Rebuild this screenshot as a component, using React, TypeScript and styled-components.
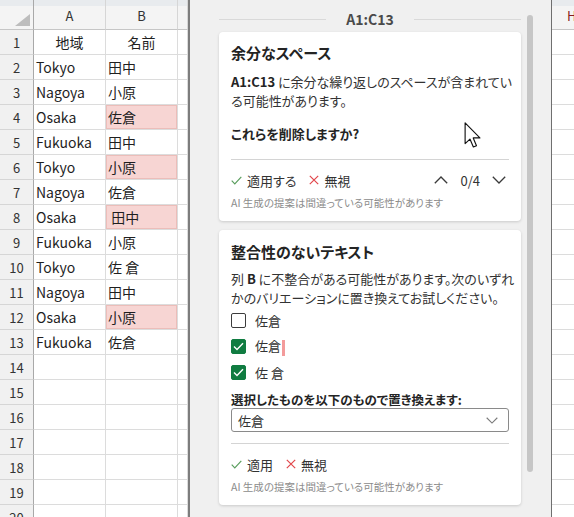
import React from 'react';
import styled, { createGlobalStyle } from 'styled-components';

const GlobalStyle = createGlobalStyle`
    html, body {
        margin: 0;
        padding: 0;
        background: #ffffff;
    }
    * {
        box-sizing: border-box;
    }
`;

const Screen = styled.div`
    display: flex;
    width: 574px;
    height: 517px;
    overflow: hidden;
    font-family: 'Noto Sans CJK JP', 'Noto Sans', sans-serif;
    color: #222;
`;

/* ---------- spreadsheet ---------- */

const Sheet = styled.div`
    display: grid;
    grid-template-columns: 34px 72px 72px 10px;
    grid-auto-rows: 25px;
    grid-template-rows: 30px;
    width: 188px;
    flex-shrink: 0;
    align-content: start;
`;

const HeaderCell = styled.div<{ $corner?: boolean }>`
    display: flex;
    align-items: ${(p) => (p.$corner ? 'flex-end' : 'center')};
    justify-content: ${(p) => (p.$corner ? 'flex-end' : 'center')};
    padding: ${(p) => (p.$corner ? '0 3px 3px 0' : '2px 0 0 0')};
    background: linear-gradient(to bottom, #e8ebee 0 6px, #f4f4f4 6px);
    border-right: 1px solid ${(p) => (p.$corner ? '#a9a9a9' : '#d6d6d6')};
    border-bottom: 1px solid #c6c6c6;
    font-size: 13px;
    color: #333;
`;

const RowHead = styled.div`
    display: flex;
    align-items: center;
    justify-content: center;
    background: #f1f1f1;
    border-right: 1px solid #a9a9a9;
    border-bottom: 1px solid #d6d6d6;
    font-size: 13px;
    color: #333;
`;

const Cell = styled.div<{ $pink?: boolean; $center?: boolean }>`
    display: flex;
    align-items: center;
    justify-content: ${(p) => (p.$center ? 'center' : 'flex-start')};
    padding-left: ${(p) => (p.$center ? '0' : '2px')};
    border-right: 1px solid #dcdcdc;
    border-bottom: 1px solid #dcdcdc;
    background: ${(p) => (p.$pink ? '#f7d5d3' : '#ffffff')};
    box-shadow: ${(p) => (p.$pink ? 'inset 0 0 0 1px #ecbdb9' : 'none')};
    font-size: 14px;
    white-space: pre;
    color: #1f1f1f;
`;

/* ---------- task pane ---------- */

const Pane = styled.div`
    display: flex;
    width: 363px;
    flex-shrink: 0;
    background: #f0f0f0;
    border-left: 2px solid #7d7d7d;
    font-feature-settings: 'palt';
`;

const PaneBody = styled.div`
    display: flex;
    flex-direction: column;
    gap: 9px;
    width: 302px;
    margin-left: 29px;
`;

const RangeHeader = styled.div`
    display: flex;
    align-items: center;
    gap: 20px;
    height: 32px;
    padding-top: 6px;
    margin-bottom: -9px;
    font-size: 14px;
    font-weight: 600;
    color: #4a4a4a;

    &::before,
    &::after {
        content: '';
        flex: 1;
        height: 1px;
        background: #d9d9d9;
    }
`;

const ScrollThumb = styled.div`
    width: 6px;
    height: 457px;
    margin: 15px 0 0 6px;
    border-radius: 3px;
    background: #c6c6c6;
`;

const Card = styled.div<{ $top?: number }>`
    position: relative;
    display: flex;
    flex-direction: column;
    background: #ffffff;
    border-radius: 4px;
    box-shadow: 0 1px 3px rgba(0, 0, 0, 0.16);
    padding: ${(p) => p.$top ?? 11}px 12px 11px;
`;

const Title = styled.div`
    font-size: 15px;
    font-weight: 700;
    line-height: 20px;
    color: #242424;
`;

const Body = styled.div<{ $gap?: number }>`
    margin-top: ${(p) => p.$gap ?? 8}px;
    font-size: 13px;
    line-height: 19px;
    color: #333;
    white-space: nowrap;

    b {
        font-weight: 700;
        color: #242424;
    }
`;

const Question = styled.div`
    margin-top: 14px;
    font-size: 13px;
    font-weight: 700;
    line-height: 19px;
    color: #242424;
`;

const Divider = styled.div<{ $gap: number }>`
    height: 1px;
    margin-top: ${(p) => p.$gap}px;
    background: #d4d4d4;
`;

const ActionRow = styled.div<{ $gap: number }>`
    display: flex;
    align-items: center;
    gap: 13px;
    height: 24px;
    margin-top: ${(p) => p.$gap}px;
`;

const Action = styled.span`
    display: flex;
    align-items: center;
    gap: 5px;
    font-size: 13px;
    color: #333;
`;

const Pager = styled.div`
    display: flex;
    align-items: center;
    gap: 12px;
    margin-left: auto;
    margin-right: 3px;
    font-size: 13px;
    color: #333;
`;

const Disclaimer = styled.div`
    margin-top: 4px;
    font-size: 10.5px;
    line-height: 14px;
    color: #8c8c8c;
`;

const OptionList = styled.div`
    display: flex;
    flex-direction: column;
`;

const Option = styled.label`
    display: flex;
    align-items: center;
    gap: 9px;
    height: 26px;
    font-size: 13px;
    color: #333;
    white-space: pre;
`;

const Box = styled.span<{ $checked?: boolean }>`
    display: flex;
    align-items: center;
    justify-content: center;
    width: 15px;
    height: 15px;
    border-radius: 2px;
    border: 1.5px solid ${(p) => (p.$checked ? '#107c41' : '#3c3c3c')};
    background: ${(p) => (p.$checked ? '#107c41' : '#ffffff')};
`;

const SpaceMark = styled.span`
    display: inline-block;
    width: 3px;
    height: 16px;
    margin-left: 1px;
    vertical-align: middle;
    background: #f39b9b;
`;

const FieldLabel = styled.div`
    margin-top: 6px;
    font-size: 12.5px;
    font-weight: 700;
    line-height: 18px;
    color: #242424;
`;

const Select = styled.div`
    display: flex;
    align-items: center;
    justify-content: space-between;
    height: 24px;
    margin-top: -1px;
    padding: 0 10px 0 6px;
    border: 1px solid #8a8a8a;
    border-radius: 3px;
    font-size: 13px;
    color: #333;
`;

const Pointer = styled.svg`
    position: absolute;
    left: 245px;
    top: 90px;
`;

const CheckIcon = () => (
    <svg width="11" height="9" viewBox="0 0 11 9">
        <polyline points="0.7,4.6 3.8,7.8 10.3,0.9" fill="none" stroke="#5a9e5e" strokeWidth="1.2" />
    </svg>
);

const CrossIcon = () => (
    <svg width="10" height="10" viewBox="0 0 10 10">
        <path d="M0.8 0.8 L9.2 9.2 M9.2 0.8 L0.8 9.2" stroke="#e2474b" strokeWidth="1.2" />
    </svg>
);

const Chevron = ({ up, color = '#3a3a3a', w = 14 }: { up?: boolean; color?: string; w?: number }) => (
    <svg width={w} height={w / 2 + 1} viewBox="0 0 14 8">
        <polyline
            points={up ? '0.8,7.3 7,1 13.2,7.3' : '0.8,0.8 7,7 13.2,0.8'}
            fill="none"
            stroke={color}
            strokeWidth="1.3"
        />
    </svg>
);

const BoxCheck = () => (
    <svg width="11" height="9" viewBox="0 0 11 9">
        <polyline points="1,4.6 4,7.6 10,1.2" fill="none" stroke="#ffffff" strokeWidth="1.4" />
    </svg>
);

type Row = { a: string; b: string; pink?: boolean };

const rows: Row[] = [
    { a: 'Tokyo', b: '田中' },
    { a: 'Nagoya', b: '小原' },
    { a: 'Osaka', b: '佐倉', pink: true },
    { a: 'Fukuoka', b: '田中' },
    { a: 'Tokyo', b: '小原', pink: true },
    { a: 'Nagoya', b: '佐倉' },
    { a: 'Osaka', b: '\u00a0田中', pink: true },
    { a: 'Fukuoka', b: '小原' },
    { a: 'Tokyo', b: '佐 倉' },
    { a: 'Nagoya', b: '田中' },
    { a: 'Osaka', b: '小原', pink: true },
    { a: 'Fukuoka', b: '佐倉' },
];

const RightCol = styled.div`
    display: grid;
    grid-template-rows: 30px;
    grid-auto-rows: 25px;
    flex: 1;
    border-left: 1px solid #6f6f6f;
`;

const RightHead = styled(HeaderCell)`
    justify-content: flex-start;
    padding-left: 15px;
    border-right: none;
    color: #8a1c1c;
`;

const RightCell = styled.div`
    border-bottom: 1px solid #dcdcdc;
`;

const App = () => {
    return (
        <>
            <GlobalStyle />
            <Screen>
                <Sheet>
                    <HeaderCell $corner>
                        <svg width="15" height="12" viewBox="0 0 15 12">
                            <polygon points="15,0 15,12 0,12" fill="#bdbdbd" />
                        </svg>
                    </HeaderCell>
                    <HeaderCell>A</HeaderCell>
                    <HeaderCell>B</HeaderCell>
                    <HeaderCell />

                    <RowHead>1</RowHead>
                    <Cell $center>地域</Cell>
                    <Cell $center>名前</Cell>
                    <Cell />

                    {rows.map((r, i) => (
                        <React.Fragment key={i}>
                            <RowHead>{i + 2}</RowHead>
                            <Cell>{r.a}</Cell>
                            <Cell $pink={r.pink}>{r.b}</Cell>
                            <Cell />
                        </React.Fragment>
                    ))}

                    {Array.from({ length: 7 }, (_, i) => (
                        <React.Fragment key={`e${i}`}>
                            <RowHead>{i + 14}</RowHead>
                            <Cell />
                            <Cell />
                            <Cell />
                        </React.Fragment>
                    ))}
                </Sheet>

                <Pane>
                    <PaneBody>
                        <RangeHeader>A1:C13</RangeHeader>

                        <Card>
                            <Title>余分なスペース</Title>
                            <Body $gap={9}>
                                <b>A1:C13</b> に余分な繰り返しのスペースが含まれてい
                                <br />
                                る可能性があります。
                            </Body>
                            <Question>これらを削除しますか?</Question>
                            <Divider $gap={16} />
                            <ActionRow $gap={8}>
                                <Action>
                                    <CheckIcon />
                                    適用する
                                </Action>
                                <Action>
                                    <CrossIcon />
                                    無視
                                </Action>
                                <Pager>
                                    <Chevron up />
                                    <span>0/4</span>
                                    <Chevron />
                                </Pager>
                            </ActionRow>
                            <Disclaimer>AI 生成の提案は間違っている可能性があります</Disclaimer>

                            <Pointer width="19" height="27" viewBox="0 0 13 19">
                                <path
                                    d="M0.6 0.6 L0.6 15.2 L4 12 L6.4 17.6 L8.6 16.7 L6.3 11.2 L11 11.2 Z"
                                    fill="#ffffff"
                                    stroke="#111111"
                                    strokeWidth="0.8"
                                    strokeLinejoin="round"
                                />
                            </Pointer>
                        </Card>

                        <Card $top={12}>
                            <Title>整合性のないテキスト</Title>
                            <Body $gap={7}>
                                列 <b>B</b> に不整合がある可能性があります。次のいずれ
                                <br />
                                かのバリエーションに置き換えてお試しください。
                            </Body>
                            <OptionList>
                                <Option>
                                    <Box />
                                    佐倉
                                </Option>
                                <Option>
                                    <Box $checked>
                                        <BoxCheck />
                                    </Box>
                                    <span>
                                        佐倉
                                        <SpaceMark />
                                    </span>
                                </Option>
                                <Option>
                                    <Box $checked>
                                        <BoxCheck />
                                    </Box>
                                    佐 倉
                                </Option>
                            </OptionList>
                            <FieldLabel>選択したものを以下のもので置き換えます:</FieldLabel>
                            <Select>
                                <span>佐倉</span>
                                <Chevron color="#7a7a7a" w={12} />
                            </Select>
                            <Divider $gap={11} />
                            <ActionRow $gap={8}>
                                <Action>
                                    <CheckIcon />
                                    適用
                                </Action>
                                <Action>
                                    <CrossIcon />
                                    無視
                                </Action>
                            </ActionRow>
                            <Disclaimer>AI 生成の提案は間違っている可能性があります</Disclaimer>
                        </Card>
                    </PaneBody>
                    <ScrollThumb />
                </Pane>

                <RightCol>
                    <RightHead>H</RightHead>
                    {Array.from({ length: 20 }, (_, i) => (
                        <RightCell key={i} />
                    ))}
                </RightCol>
            </Screen>
        </>
    );
};

export default App;
